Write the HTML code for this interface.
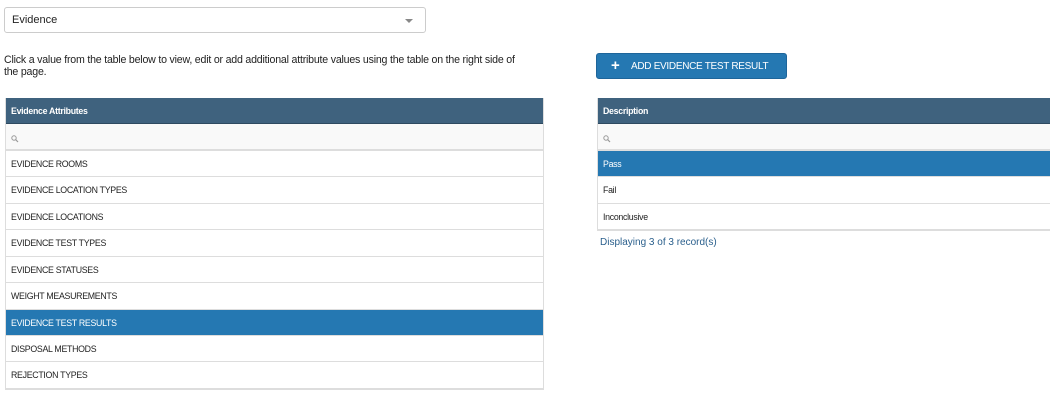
<!DOCTYPE html>
<html><head><style>
body{margin:0;background:#fff;font-family:"Liberation Sans",sans-serif;color:#222;width:1050px;height:406px;overflow:hidden;position:relative}
.sel{position:absolute;left:4px;top:7px;border:1px solid #ccc;border-radius:3px;font-size:11px;line-height:24px;padding-left:7px;box-sizing:border-box;width:422px;height:26px}
.sel:after{content:"";position:absolute;right:12px;top:11px;border-left:4px solid transparent;border-right:4px solid transparent;border-top:4px solid #888}
.hint{position:absolute;left:4px;top:54px;width:530px;font-size:10.6px;line-height:12px;letter-spacing:-0.2px}
.tbl{position:absolute;top:98px;border:1px solid #ddd;border-top:none;box-sizing:border-box}
.tbl div{height:26.45px;line-height:26px;font-size:8.8px;padding-left:5px;border-bottom:1px solid #ddd;box-sizing:border-box;letter-spacing:-0.3px}
.tbl .h{background:#3f627e;color:#fff;font-weight:bold;border-bottom:1px solid #2e4a60}
.tbl .s{background:#f9f9f9;border-bottom:2px solid #ddd;padding-top:1px}
.tbl .a{background:#2578b2;color:#fff}
.btn{position:absolute;left:596px;top:53px;width:191px;height:26px;background:#2578b2;border:1px solid #1e659a;border-radius:3px;box-sizing:border-box;color:#fff;font-size:10px;line-height:26px;letter-spacing:-0.3px}
.btn b{font-size:15px;position:absolute;left:14px;top:0;line-height:24px}
.btn span{position:absolute;left:34px}
.disp{position:absolute;left:600px;top:237px;font-size:10px;color:#2a5f8c}
svg{vertical-align:middle}
</style></head><body>
<div class="sel">Evidence</div>
<div class="hint">Click a value from the table below to view, edit or add additional attribute values using the table on the right side of<br>the page.</div>
<div class="tbl" style="left:5px;width:539px">
<div class="h">Evidence Attributes</div>
<div class="s"><svg width="8" height="8" viewBox="0 0 8 8"><circle cx="3" cy="3" r="2.2" fill="none" stroke="#999" stroke-width="1"/><path d="M4.6 4.6L7 7" stroke="#999" stroke-width="1.2"/></svg></div>
<div>EVIDENCE ROOMS</div>
<div>EVIDENCE LOCATION TYPES</div>
<div>EVIDENCE LOCATIONS</div>
<div>EVIDENCE TEST TYPES</div>
<div>EVIDENCE STATUSES</div>
<div>WEIGHT MEASUREMENTS</div>
<div class="a">EVIDENCE TEST RESULTS</div>
<div>DISPOSAL METHODS</div>
<div>REJECTION TYPES</div>
</div>
<div class="btn"><b>+</b><span>ADD EVIDENCE TEST RESULT</span></div>
<div class="tbl" style="left:597px;width:460px">
<div class="h">Description</div>
<div class="s"><svg width="8" height="8" viewBox="0 0 8 8"><circle cx="3" cy="3" r="2.2" fill="none" stroke="#999" stroke-width="1"/><path d="M4.6 4.6L7 7" stroke="#999" stroke-width="1.2"/></svg></div>
<div class="a">Pass</div>
<div>Fail</div>
<div>Inconclusive</div>
</div>
<div class="disp">Displaying 3 of 3 record(s)</div>
</body></html>
